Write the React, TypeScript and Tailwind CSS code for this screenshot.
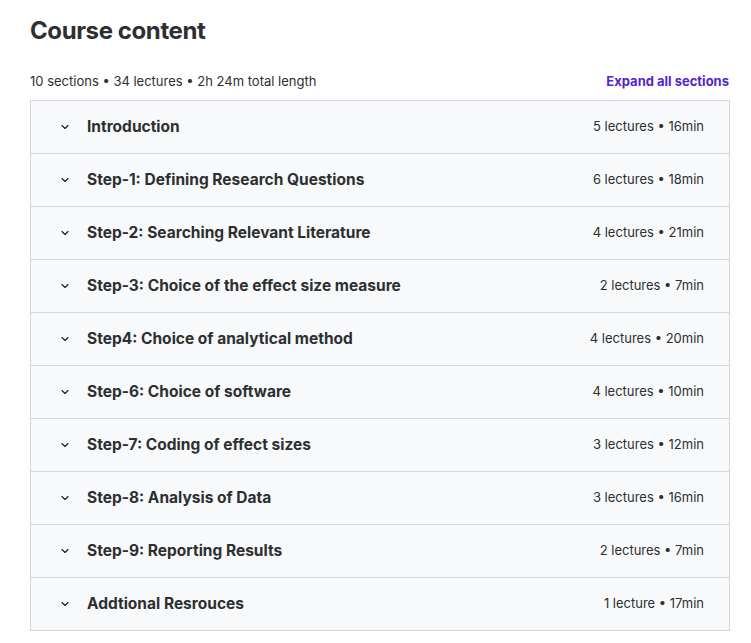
import { ChevronDown } from "lucide-react";

const sections = [
  { title: "Introduction", meta: "5 lectures • 16min" },
  { title: "Step-1: Defining Research Questions", meta: "6 lectures • 18min" },
  { title: "Step-2: Searching Relevant Literature", meta: "4 lectures • 21min" },
  { title: "Step-3: Choice of the effect size measure", meta: "2 lectures • 7min" },
  { title: "Step4: Choice of analytical method", meta: "4 lectures • 20min" },
  { title: "Step-6: Choice of software", meta: "4 lectures • 10min" },
  { title: "Step-7: Coding of effect sizes", meta: "3 lectures • 12min" },
  { title: "Step-8: Analysis of Data", meta: "3 lectures • 16min" },
  { title: "Step-9: Reporting Results", meta: "2 lectures • 7min" },
  { title: "Addtional Resrouces", meta: "1 lecture • 17min" },
];

const App = () => {
  return (
    <div
      className="min-h-[643px] bg-white pl-[30px] pr-[21px] pt-[15px] text-[#2d2f31]"
      style={{ fontFamily: "Inter, 'Liberation Sans', sans-serif" }}
    >
      <h2 className="text-[24px] font-bold leading-[32px] tracking-[-0.4px]">Course content</h2>

      <div className="mt-[24px] flex items-end justify-between pr-[1px]">
        <span className="text-[13px] leading-[20px]">10 sections • 34 lectures • 2h 24m total length</span>
        <button className="text-[13px] font-bold leading-[20px] text-[#5624d0]">Expand all sections</button>
      </div>

      {/* Sections */}
      <div className="mt-[9px] border border-[#d1d7dc] bg-[#f7f9fa]">
        {sections.map((s, idx) => (
          <div
            key={idx}
            className={`flex items-center justify-between pl-[28px] pr-[25px] ${
              idx < sections.length - 1 ? "h-[53px] border-b border-[#d1d7dc]" : "h-[52px]"
            }`}
          >
            <div className="flex items-center gap-[16px]">
              <ChevronDown className="h-[12px] w-[12px] text-[#1c1d1f]" strokeWidth={2.25} />
              <span className="text-[15.5px] font-bold">{s.title}</span>
            </div>
            <span className="text-[13px]">{s.meta}</span>
          </div>
        ))}
      </div>
    </div>
  );
};

export default App;
